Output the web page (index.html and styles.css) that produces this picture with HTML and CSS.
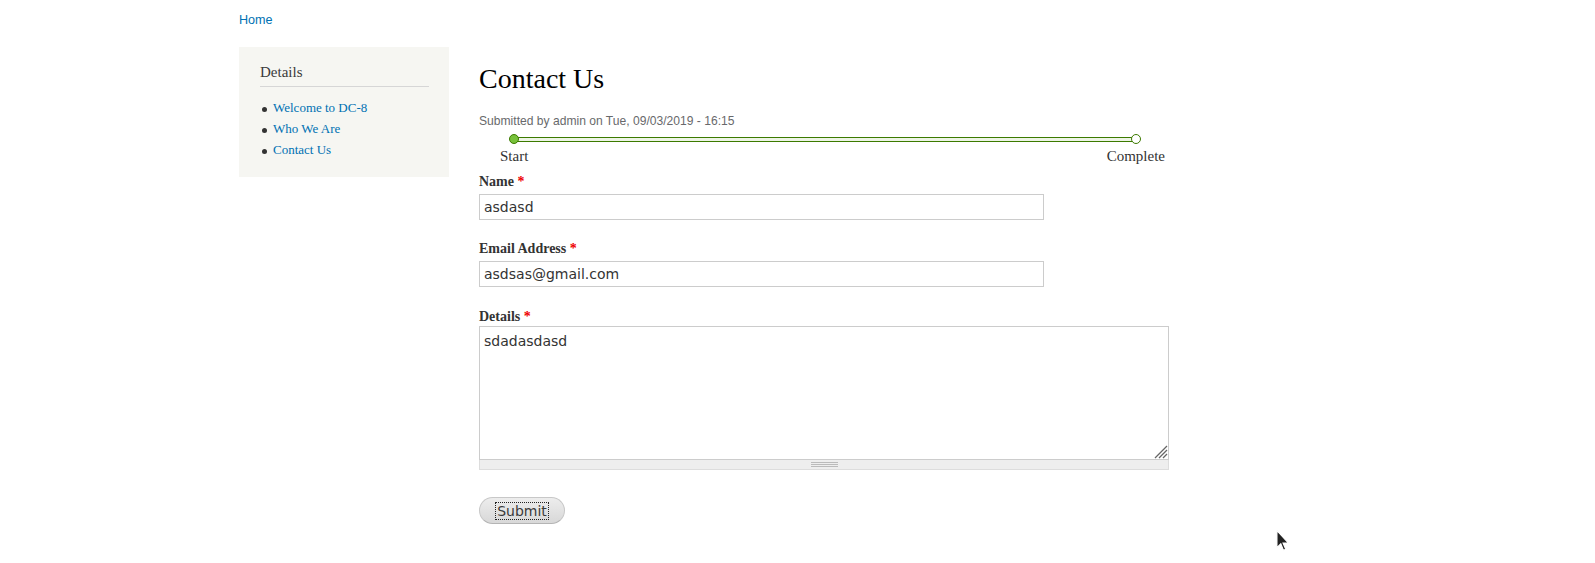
FILE: index.html
```html
<!DOCTYPE html>
<html>
<head>
<meta charset="utf-8">
<title>Contact Us | DC-8</title>
<link rel="stylesheet" href="styles.css">
</head>
<body>
<div class="page">
  <div class="breadcrumb"><a href="#">Home</a></div>
  <div class="layout">
    <aside class="sidebar">
      <h2 class="block-title">Details</h2>
      <ul class="menu">
        <li><a href="#">Welcome to DC-8</a></li>
        <li><a href="#">Who We Are</a></li>
        <li><a href="#">Contact Us</a></li>
      </ul>
    </aside>
    <main class="content">
      <h1 class="title">Contact Us</h1>
      <div class="submitted">Submitted by admin on Tue, 09/03/2019 - 16:15</div>
      <div class="progress">
        <div class="bar">
          <span class="dot dot-start"></span>
          <span class="dot dot-end"></span>
        </div>
        <div class="progress-labels">
          <span>Start</span>
          <span>Complete</span>
        </div>
      </div>
      <form class="webform">
        <div class="form-item">
          <label>Name <span class="req">*</span></label>
          <input class="text" type="text" value="asdasd">
        </div>
        <div class="form-item">
          <label>Email Address <span class="req">*</span></label>
          <input class="text" type="text" value="asdsas@gmail.com">
        </div>
        <div class="form-item form-item-area">
          <label>Details <span class="req">*</span></label>
          <div class="textarea-wrap">
            <textarea class="area">sdadasdasd</textarea>
            <svg class="resizer" width="16" height="16" viewBox="0 0 16 16"><path d="M15 3 L3 15 M15 7 L7 15 M15 11 L11 15" stroke="#666" stroke-width="1.3" fill="none"/></svg>
            <div class="grippie"><span class="grip-lines"></span></div>
          </div>
        </div>
        <div class="actions">
          <button type="button" class="submit"><span class="focus">Submit</span></button>
        </div>
      </form>
    </main>
  </div>
</div>
<svg class="cursor" width="14" height="22" viewBox="0 0 12 20"><path d="M0.5 0.5 L0.5 16 L4 12.5 L6.5 18.5 L8.5 17.6 L6 11.8 L10.8 11.8 Z" fill="#222" stroke="#fff" stroke-width="1"/></svg>
</body>
</html>
```
FILE: styles.css
```css
html, body {
  margin: 0;
  padding: 0;
  background: #fff;
}
body {
  font-family: "Liberation Serif", "Times New Roman", serif;
  color: #3b3b3b;
  position: relative;
  min-height: 563px;
  overflow: hidden;
}
a {
  color: #0071b3;
  text-decoration: none;
}
.page {
  padding-left: 239px;
}
.breadcrumb {
  font-family: "Liberation Sans", Arial, sans-serif;
  font-size: 12.6px;
  line-height: 14px;
  padding-top: 13px;
  height: 34px;
}
.layout {
  display: flex;
  align-items: flex-start;
  gap: 30px;
}
.sidebar {
  width: 169px;
  background: #f6f6f2;
  padding: 16px 20px 17px 21px;
}
.block-title {
  margin: 0;
  font-size: 15px;
  font-weight: normal;
  line-height: 18px;
  color: #3b3b3b;
  padding-bottom: 5px;
  border-bottom: 1px solid #d6d6d6;
}
.menu {
  margin: 11px 0 0 0;
  padding: 0;
  font-size: 13px;
  line-height: 20.8px;
  color: #333;
}
.menu li {
  list-style: none;
  position: relative;
  padding-left: 13px;
}
.menu li::before {
  content: "";
  position: absolute;
  left: 2px;
  top: 9px;
  width: 5px;
  height: 5px;
  border-radius: 50%;
  background: #333;
}
.content {
  width: 689px;
  padding-top: 19px;
}
.title {
  margin: 0;
  font-size: 28px;
  font-weight: normal;
  line-height: 26px;
  color: #000;
}
.submitted {
  margin-top: 22px;
  font-family: "Liberation Sans", Arial, sans-serif;
  font-size: 12.1px;
  line-height: 14px;
  color: #68696b;
}
.progress {
  margin-top: 9px;
}
.bar {
  position: relative;
  height: 3px;
  margin: 2px 32px 0 35px;
  border-top: 1px solid #3c7a00;
  border-bottom: 1px solid #3c7a00;
  background: #eef5e6;
}
.dot {
  position: absolute;
  top: -4px;
  border: 1px solid #3c7a00;
  border-radius: 50%;
  box-sizing: border-box;
  width: 10px;
  height: 10px;
}
.dot-start {
  left: -5px;
  background: #77c13a;
}
.dot-end {
  right: -5px;
  background: #fff;
}
.progress-labels {
  display: flex;
  justify-content: space-between;
  padding: 0 3px 0 21px;
  margin-top: 5px;
  font-size: 15px;
  line-height: 18px;
  color: #333;
}
.webform {
  margin-top: 8px;
}
.form-item {
  margin-bottom: 20px;
}
.form-item label {
  display: block;
  font-size: 14px;
  font-weight: bold;
  line-height: 18px;
  color: #333;
  margin-bottom: 3px;
}
.form-item-area {
  padding-top: 1px;
}
.form-item-area label {
  margin-bottom: 0;
}
.req {
  color: #e00;
}
.text {
  display: block;
  box-sizing: border-box;
  width: 565px;
  height: 26px;
  margin: 0;
  padding: 0 4px;
  border: 1px solid #ccc;
  font-family: "DejaVu Sans", sans-serif;
  font-size: 14px;
  color: #333;
  background: #fff;
  outline: none;
}
.textarea-wrap {
  position: relative;
  width: 690px;
}
.area {
  display: block;
  box-sizing: border-box;
  width: 690px;
  height: 134px;
  margin: 0;
  padding: 4px 4px;
  border: 1px solid #ccc;
  font-family: "DejaVu Sans", sans-serif;
  font-size: 14px;
  line-height: 20px;
  color: #333;
  resize: none;
  outline: none;
  background: #fff;
}
.resizer {
  position: absolute;
  right: 1px;
  bottom: 11px;
}
.grippie {
  box-sizing: border-box;
  height: 10px;
  background: #eee;
  border: 1px solid #ddd;
  border-top: 0;
  display: flex;
  justify-content: center;
  align-items: center;
}
.grip-lines {
  width: 27px;
  height: 5px;
  box-sizing: border-box;
  border-top: 1px solid #bbb;
  border-bottom: 1px solid #bbb;
  background: linear-gradient(#bbb, #bbb) center / 100% 1px no-repeat;
}
.actions {
  margin-top: 27px;
}
.submit {
  box-sizing: border-box;
  width: 86px;
  height: 27px;
  border: 1px solid #c8c8c8;
  border-bottom-color: #b4b4b4;
  border-radius: 20px;
  background: linear-gradient(#ededed, #d8d8d8);
  font-family: "DejaVu Sans", sans-serif;
  font-size: 14px;
  color: #3a3a3a;
  padding: 0;
  cursor: default;
}
.focus {
  outline: 1px dotted #222;
  padding: 0 1px;
}
.cursor {
  position: absolute;
  left: 1276px;
  top: 530px;
}
```
